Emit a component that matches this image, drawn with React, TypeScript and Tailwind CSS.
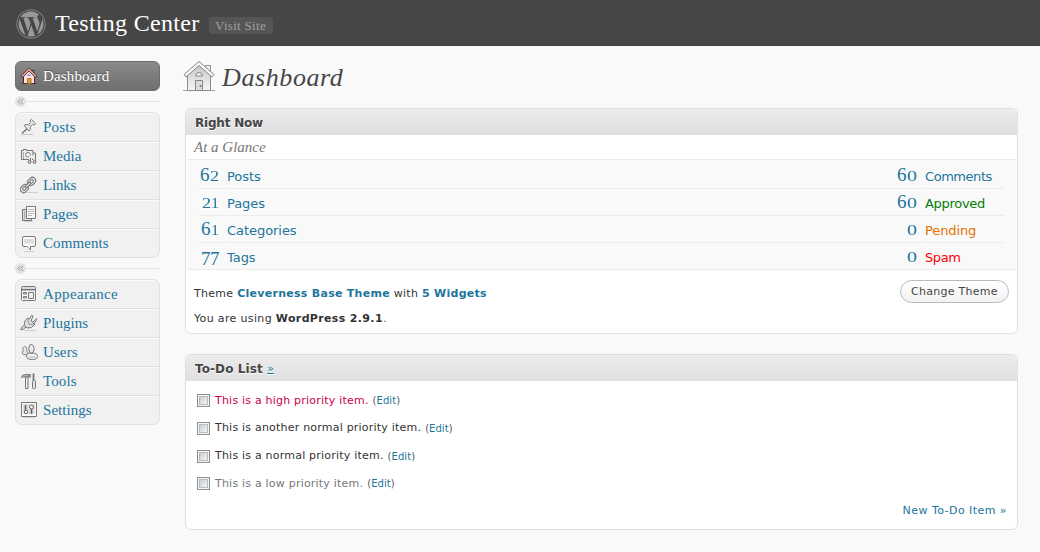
import type { ReactNode } from "react";
import { FaWordpress } from "react-icons/fa";

const serif = "font-['Liberation_Serif',serif]";

const icons: Record<string, ReactNode> = {
  Posts: (
    <>
      <path d="M1 16.500h12" stroke="#c8c8c8" />
      <path d="M2 15.500l5-5" stroke="#777" strokeWidth="1.500" />
      <path d="M4 7.500l2-1 2.500.2 2-2.200-.5-2 1.500-1 4 4-1 1.500-2-.5-2.200 2 .2 3-1.500 1.500z" fill="#e8e8e8" stroke="#7c7c7c" />
      <path d="M8.500 6.700l2.500 2" stroke="#aaa" />
    </>
  ),
  Media: (
    <>
      <path d="M1.500 3.500h2v-1h3v1h6.500v9h-11.500z" fill="#eee" stroke="#777" />
      <path d="M3.500 5v7" stroke="#aaa" />
      <circle cx="8" cy="7.800" r="2.300" fill="#fff" stroke="#777" />
      <path d="M10.500 15.500v-5.500h5v5" fill="none" stroke="#eee" strokeWidth="3" />
      <path d="M10.500 15v-4M15.500 15v-9h-2.500" fill="none" stroke="#777" />
      <circle cx="9.500" cy="15" r="1.500" fill="#ccc" stroke="#777" />
      <circle cx="14.500" cy="15" r="1.500" fill="#ccc" stroke="#777" />
    </>
  ),
  Links: (
    <>
      <path d="M5 16.500h13" stroke="#d0d0d0" />
      <g transform="rotate(-45 8 9)" fill="none" stroke="#777">
        <rect x="-1.500" y="5.700" width="9" height="6.600" rx="3.300" fill="#e2e2e2" />
        <rect x="1" y="7.700" width="4.500" height="2.600" rx="1.300" fill="#f1f1f1" />
        <rect x="8.500" y="5.700" width="9" height="6.600" rx="3.300" fill="#e2e2e2" />
        <rect x="10.500" y="7.700" width="4.500" height="2.600" rx="1.300" fill="#f1f1f1" />
        <rect x="4.500" y="7.800" width="7" height="2.400" rx="1.200" fill="#ddd" />
      </g>
    </>
  ),
  Pages: (
    <>
      <path d="M4 16.500h9" stroke="#ccc" />
      <path d="M2.500 4.500h4v9h5v2h-9z" fill="#ddd" stroke="#777" />
      <path d="M4.500 6v8" stroke="#aaa" />
      <path d="M6.500 1.500h9v12h-9z" fill="#f8f8f8" stroke="#777" />
      <path d="M8 4.500h6M8 6.500h6M8 8.500h6M8 10.500h4" stroke="#bbb" />
    </>
  ),
  Comments: (
    <>
      <path d="M4 17.500h10" stroke="#ccc" />
      <path d="M4 2.500h10q1.500 0 1.500 1.500v7q0 1.500-1.500 1.500h-3.500v3.500l-3.500-3.500h-3q-1.500 0-1.500-1.500v-7q0-1.500 1.500-1.500z" fill="#f9f9f9" stroke="#7a7a7a" />
      <path d="M4 5h10v4.500h-10z" fill="#dcdcdc" />
    </>
  ),
  Appearance: (
    <>
      <rect x="1.500" y="1.500" width="14" height="14" rx="1" fill="#f6f6f6" stroke="#777" />
      <path d="M2 3h13M2 5.500h13" stroke="#bbb" />
      <path d="M2 4.500h13" stroke="#777" />
      <path d="M3.500 7.500h3v1.500h-3zM3.500 11.500h3v1.500h-3zM8.500 7.500h5v6h-5z" fill="#eee" stroke="#777" />
    </>
  ),
  Plugins: (
    <>
      <path d="M4 16.500h12" stroke="#ccc" />
      <path d="M.8 16l.7-2.500 3-2.500 1.800 1.800-2.800 2.200z" fill="#ddd" stroke="#777" />
      <path d="M4.500 11.500q-1-5 3.500-7.500l7 6q-3 5-8 4z" fill="#ddd" stroke="#777" />
      <path d="M9 5.500l2.500-4 1.500.5-2 5M12.500 8.700l4-4-.5 2.300-3 3.500" fill="#eee" stroke="#777" />
      <path d="M7.500 5.500l2 5.500 4-1.500" fill="none" stroke="#999" />
    </>
  ),
  Users: (
    <>
      <path d="M3 9q-.8-5.500 1.700-5.500t2.300 5q1.500 1 .5 2.800-2 1-4.500 0-2-1.300 0-2.300z" fill="#e6e6e6" stroke="#868686" />
      <path d="M9 7q-.6-5.500 2.300-5.500t2.700 5.500q-.2 2.500-2.500 3-2.300-.5-2.500-3z" fill="#eaeaea" stroke="#777" />
      <path d="M6.300 13.500q.2-3.300 3.200-3.500 2 1.200 4 0 3.800.3 4.200 3.500-.5 3-5.500 3t-5.900-3z" fill="#f6f6f6" stroke="#777" />
      <path d="M8.500 14h7" stroke="#d0d0d0" strokeWidth="2" />
    </>
  ),
  Tools: (
    <>
      <path d="M1.500 5.500q.5-3 4-3h3.500v2.500h-3q-2.500-.5-4.500.5z" fill="#bbb" stroke="#777" />
      <path d="M5.500 5h2.500v11.500h-2.500z" fill="#eee" stroke="#777" />
      <path d="M10 2v3.500" stroke="#777" strokeWidth="1.500" />
      <path d="M13.500 1.500v7" stroke="#777" strokeWidth="1.800" />
      <path d="M8.500 3.500h2" stroke="#888" />
      <rect x="12.500" y="8.500" width="3" height="8" rx="1" fill="#e6e6e6" stroke="#777" />
    </>
  ),
  Settings: (
    <>
      <path d="M3 16.500h12" stroke="#d4d4d4" />
      <path d="M1.500 1.500h15v14h-15z" fill="#fafafa" stroke="#777" />
      <path d="M3 3h12v10H3z" fill="#dedede" />
      <path d="M5.500 4v6M11.500 8v5" stroke="#666" strokeWidth="1.600" />
      <circle cx="6" cy="11" r="1.700" fill="#fff" stroke="#666" />
      <circle cx="11.500" cy="6" r="1.900" fill="#fff" stroke="#666" />
    </>
  ),
};

function SmallHouse() {
  return (
    <svg width="18" height="18" viewBox="0 0 18 18" fill="none">
      <path d="M1 16.500h16" stroke="#5b4140" />
      <path d="M12 3.500h2v4h-2z" fill="#f3dede" stroke="#4a2a2c" />
      <path d="M3.500 9v7.500h11v-7.500l-5.500-5.500z" fill="#ffdede" stroke="#4a2a2c" />
      <path d="M1.500 10l7.500-7.500 7.500 7.500" stroke="#4a2a2c" strokeWidth="2.600" />
      <path d="M2 9.500l7-7 7 7" stroke="#f7b5af" strokeWidth="1.300" />
      <path d="M7 9q2-3.500 4 0z" fill="#4c9adf" />
      <path d="M7.500 11.500h3.500v5h-3.500z" fill="#d9a339" stroke="#a8742a" />
    </svg>
  );
}

function LargeHouse() {
  return (
    <svg width="32" height="31" viewBox="0 0 32 31" fill="none">
      <defs>
        <linearGradient id="wall" x1="0" y1="0" x2="0" y2="1">
          <stop offset="0" stopColor="#c4c4c4" />
          <stop offset=".6" stopColor="#e4e4e4" />
          <stop offset="1" stopColor="#f5f5f5" />
        </linearGradient>
      </defs>
      <path d="M0 29.500h32" stroke="#a5a5a5" />
      <path d="M22.500 4.500h5v8l-5-4z" fill="#eee" stroke="#949494" />
      <path d="M4.500 14v15.500h23v-15.500l-11.500-10z" fill="url(#wall)" stroke="#8c8c8c" />
      <path d="M1 13.500l15-13 15 13-2 2.500-13-11.500-13 11.500z" fill="#fafafa" stroke="#858585" strokeLinejoin="round" />
      <path d="M12.500 15q.5-3.500 3.500-3.500t3.500 3.500z" fill="#f2f2f2" stroke="#858585" />
      <path d="M12.500 19.500h7v10h-7z" fill="#dcdcdc" stroke="#858585" />
      <circle cx="17.500" cy="25" r=".9" fill="#666" />
    </svg>
  );
}

function Separator() {
  return (
    <div className="flex h-[21px] items-center">
      <div className="flex size-[11px] items-center justify-center rounded-full bg-[#e3e3e3]">
        <svg width="7" height="7" viewBox="0 0 7 7" fill="none" stroke="#999">
          <path d="M3.500.8L1 3.500l2.500 2.700M6.300.8L3.800 3.500l2.500 2.700" />
        </svg>
      </div>
      <div className="h-px flex-1 bg-[#e3e3e3]" />
    </div>
  );
}

function Menu({ items }: { items: [string, string][] }) {
  return (
    <nav className="h-[146px] overflow-hidden rounded-[7px] border border-[#e0e0e0] bg-[#f1f1f1]">
      {items.map(([name, tracking]) => (
        <a
          key={name}
          className={`flex h-[29px] items-start border-t border-b border-t-[#fbfbfb] border-b-[#dfdfdf] pl-[4px] text-[15px] text-[#21759b] ${serif}`}
        >
          <svg className="mt-[4px] mr-[5px]" width="18" height="18" viewBox="0 0 18 18" fill="none">
            {icons[name]}
          </svg>
          <span className={`leading-[27px] ${tracking}`}>{name}</span>
        </a>
      ))}
    </nav>
  );
}

function PanelHeader({ children }: { children: ReactNode }) {
  return (
    <h3 className="flex h-[26px] items-center bg-linear-to-b from-[#ececec] to-[#dfdfdf] pt-px pl-[9px] text-[12px] font-bold text-[#464646] [text-shadow:0_1px_0_#fff]">
      {children}
    </h3>
  );
}

/* Old-style figures: 0, 1 and 2 sit at x-height, 7 descends below the baseline. */
const digitStyles: Record<string, string> = {
  "0": "inline-block w-[10px] origin-left scale-x-[1.450] text-left text-[14px] leading-none",
  "1": "inline-block w-[8px] origin-left scale-x-[1.150] text-left text-[14px] leading-none",
  "2": "inline-block w-[9px] origin-left scale-x-[1.300] text-left text-[14px] leading-none",
  "6": "inline-block w-[10px] text-left leading-none",
  "7": "relative top-[3px] inline-block w-[9px] text-left leading-none",
};

function Count({ value, className }: { value: string; className: string }) {
  return (
    <span className={`block h-[27px] pr-[6px] text-right text-[19px] leading-[26px] whitespace-nowrap text-[#21759b] ${serif} ${className}`}>
      {value.split("").map((digit, i) => (
        <span key={i} className={digitStyles[digit]}>
          {digit}
        </span>
      ))}
    </span>
  );
}

const posts: [string, string][] = [
  ["62", "Posts"],
  ["21", "Pages"],
  ["61", "Categories"],
  ["77", "Tags"],
];

const comments: [string, string, string][] = [
  ["60", "Comments", "text-[#21759b] tracking-[-0.450px]"],
  ["60", "Approved", "text-[#008000] tracking-[-0.300px]"],
  ["0", "Pending", "text-[#e66f00] tracking-[-0.100px]"],
  ["0", "Spam", "text-[#ff0000] tracking-[-0.400px]"],
];

const todos: [string, string][] = [
  ["This is a high priority item.", "text-[#cc0044]"],
  ["This is another normal priority item.", "text-[#333]"],
  ["This is a normal priority item.", "text-[#333]"],
  ["This is a low priority item.", "text-[#777]"],
];

export default function App() {
  return (
    <div className="h-[552px] w-[1040px] overflow-hidden bg-[#f9f9f9] font-['DejaVu_Sans',sans-serif] text-[#333]">
      <header className="flex h-[46px] items-center bg-[#464646] pl-[16px]">
        <FaWordpress className="mt-[2px] size-[30px] text-[#999]" />
        <h1 className={`ml-[9px] text-[24px] leading-none whitespace-nowrap text-white ${serif} tracking-[0.300px]`}>Testing Center</h1>
        <a className={`mt-[5px] ml-[9px] flex h-[17px] w-[64px] items-center justify-center rounded-[3px] bg-[#555] text-[13px] tracking-[0.300px] whitespace-nowrap text-[#a0a0a0] ${serif}`}>
          Visit Site
        </a>
      </header>

      <div className="flex">
        <aside className="w-[160px] pt-[15px] pl-[15px]">
          <a className={`flex h-[30px] items-center rounded-[6px] border border-[#6d6d6d] bg-linear-to-b from-[#8a8a8a] to-[#6f6f6f] pl-[4px] text-[15px] text-white [text-shadow:0_-1px_0_#555] ${serif}`}>
            <SmallHouse />
            <span className="ml-[5px] tracking-[0.150px]">Dashboard</span>
          </a>
          <Separator />
          <Menu
            items={[
              ["Posts", "tracking-[0.200px]"],
              ["Media", "tracking-[0px]"],
              ["Links", "tracking-[-0.200px]"],
              ["Pages", "tracking-[0.050px]"],
              ["Comments", "tracking-[0.100px]"],
            ]}
          />
          <Separator />
          <Menu
            items={[
              ["Appearance", "tracking-[0.350px]"],
              ["Plugins", "tracking-[0px]"],
              ["Users", "tracking-[0.100px]"],
              ["Tools", "tracking-[0.100px]"],
              ["Settings", "tracking-[0.050px]"],
            ]}
          />
        </aside>

        <main className="w-[858px] pt-[15px] pl-[25px]">
          <div className="-ml-[2px] flex h-[47px] items-start">
            <LargeHouse />
            <h2 className={`ml-[7px] text-[26px] leading-[34px] text-[#464646] italic ${serif} tracking-[0.600px]`}>Dashboard</h2>
          </div>

          <section className="h-[226px] overflow-hidden rounded-[6px] border border-[#dfdfdf] bg-white">
            <PanelHeader>
              <span className="tracking-[-0.200px]">Right Now</span>
            </PanelHeader>
            <p className={`h-[24px] pl-[8px] text-[15px] leading-[25px] text-[#777] italic ${serif}`}>At a Glance</p>
            <div className="mx-px flex h-[111px] border-y border-[#ececec] bg-[#f9f9f9] px-[12px] pt-[2px]">
              <div className="flex-1">
                {posts.map(([count, label], i) => {
                  const rule = i < 3 ? "border-b border-[#ececec]" : "";
                  return (
                    <div key={label} className="flex h-[27px] gap-[2px]">
                      <Count value={count} className={`w-[26px] ${rule}`} />
                      <span className={`flex-1 text-[13px] leading-[30px] tracking-[-0.050px] text-[#21759b] ${rule}`}>{label}</span>
                    </div>
                  );
                })}
              </div>
              <div className="w-[110px]">
                {comments.map(([count, label, style], i) => {
                  const rule = i < 3 ? "border-b border-[#ececec]" : "";
                  return (
                    <div key={label} className="flex h-[27px] gap-[2px]">
                      <Count value={count} className={`w-[29px] ${rule}`} />
                      <span className={`flex-1 text-[13px] leading-[30px] ${style} ${rule}`}>{label}</span>
                    </div>
                  );
                })}
              </div>
            </div>
            <div className="flex items-start justify-between pt-[10px] pr-[8px] pl-[8px] text-[11px]">
              <p className="leading-[27px] tracking-[0.280px] whitespace-nowrap">
                Theme <b className="text-[#21759b]">Cleverness Base Theme</b> with <b className="text-[#21759b]">5 Widgets</b>
              </p>
              <button className="h-[23px] w-[109px] rounded-full border border-[#bbb] bg-linear-to-b from-white to-[#f2f2f2] pt-[2px] text-[11px] tracking-[0.270px] whitespace-nowrap text-[#464646]">
                Change Theme
              </button>
            </div>
            <p className="pl-[8px] text-[11px] leading-[23px] tracking-[0.350px]">
              You are using <b>WordPress 2.9.1</b>
              <span className="text-[#21759b]">.</span>
            </p>
          </section>

          <section className="mt-[20px] flex h-[176px] flex-col overflow-hidden rounded-[6px] border border-[#dfdfdf] bg-white">
            <PanelHeader>
              <span className="tracking-[0.100px]">To-Do List&nbsp;</span>
              <a className="mt-px text-[11px] font-normal text-[#21759b] underline">»</a>
            </PanelHeader>
            <ul className="pt-[6px] pl-[11px]">
              {todos.map(([text, color]) => (
                <li key={text} className={`flex h-[27.700px] items-center text-[11px] whitespace-nowrap ${color}`}>
                  <span className="mr-[5px] flex size-[13px] items-center justify-center border border-[#8e8f8f] bg-[#f4f4f4]">
                    <span className="size-[9px] border border-[#b4bbc1] bg-linear-to-br from-[#c9cdd3] to-[#f4f4f4]" />
                  </span>
                  <span className="tracking-[0.210px]">{text}</span>
                  <span className="ml-[4px] text-[10px] tracking-[0.050px] text-[#555]">
                    (<a className="text-[#21759b]">Edit</a>)
                  </span>
                </li>
              ))}
            </ul>
            <a className="mt-[5px] mr-[10px] self-end text-[11px] tracking-[0.450px] text-[#21759b]">New To-Do Item »</a>
          </section>
        </main>
      </div>
    </div>
  );
}
